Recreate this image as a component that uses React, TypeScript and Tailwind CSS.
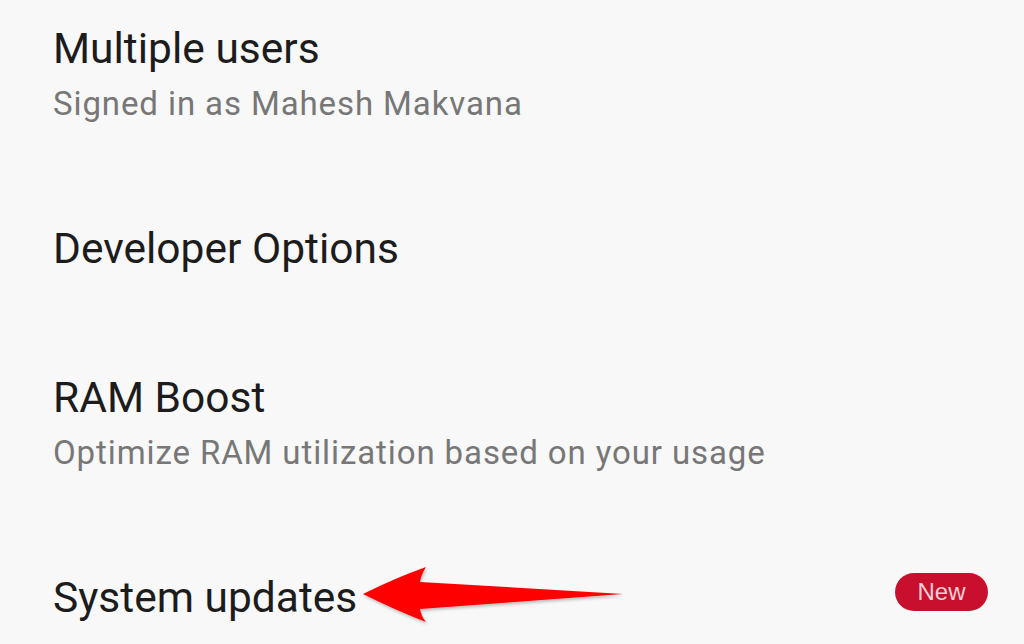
import React from "react";

function Title({ children }: { children: React.ReactNode }) {
  return (
    <div className="text-[42.5px] leading-[52px] text-[#1c1c1c]">
      {children}
    </div>
  );
}

function Sub({ children }: { children: React.ReactNode }) {
  return (
    <div className="mt-[7px] text-[33px] leading-[44px] tracking-[0.9px] text-[#777777]">
      {children}
    </div>
  );
}

export default function App() {
  return (
    <div className="w-[1024px] h-[644px] overflow-hidden bg-[#f8f8f8] font-['Roboto',sans-serif]">
      <div className="flex flex-col gap-[97px] pl-[53px] pr-[36px] pt-[23px]">
        <div>
          <Title>Multiple users</Title>
          <Sub>Signed in as Mahesh Makvana</Sub>
        </div>
        <div>
          <Title>Developer Options</Title>
        </div>
        <div>
          <Title>RAM Boost</Title>
          <Sub>Optimize RAM utilization based on your usage</Sub>
        </div>
        <div className="relative flex items-start justify-between">
          <Title>System updates</Title>
          <div className="mt-[1px] flex h-[38px] w-[93px] items-center justify-center rounded-full bg-[#c8102e] font-['Liberation_Sans',Arial,sans-serif] text-[24px] text-[#f2cdd5]">
            New
          </div>
          <svg
            className="absolute left-[302px] top-[-13px] overflow-visible"
            width="280"
            height="70"
            viewBox="0 0 280 70"
          >
            <defs>
              <filter id="sh" x="-10%" y="-30%" width="120%" height="160%">
                <feDropShadow dx="1" dy="2" stdDeviation="1.5" floodColor="#000" floodOpacity="0.25" />
              </filter>
            </defs>
            <path
              d="M8 35 Q40 19 71 8 Q66 16 65 23 L268 35 L65 50 Q66 57 71 63 Q40 51 8 35 Z"
              fill="#ff0000"
              filter="url(#sh)"
            />
          </svg>
        </div>
      </div>
    </div>
  );
}
